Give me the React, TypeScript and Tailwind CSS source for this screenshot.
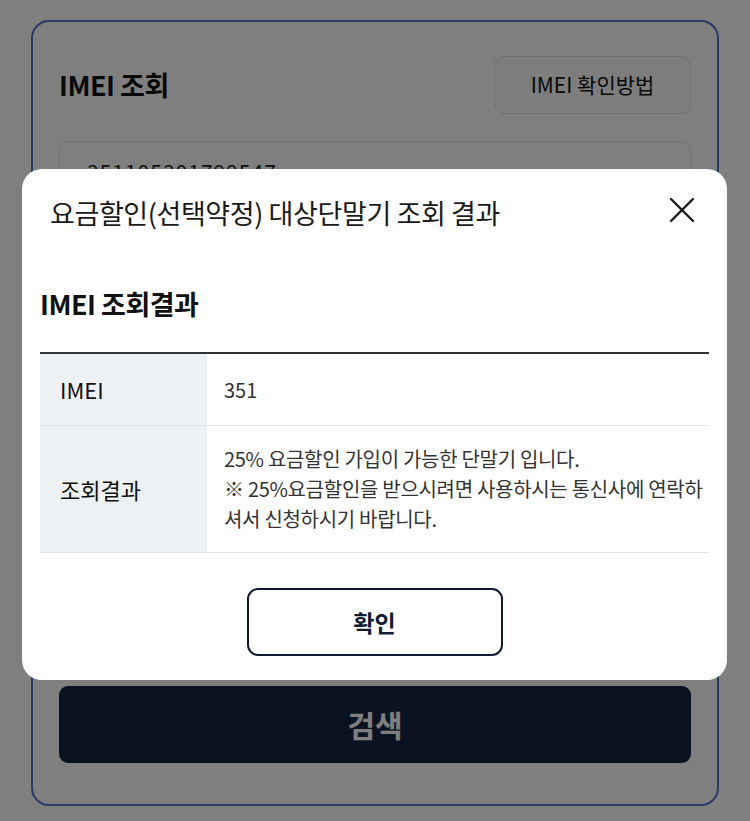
import React from 'react';

const font = { fontFamily: '"Noto Sans CJK KR", "Noto Sans", sans-serif' };

const CloseIcon = () => (
  <svg width="26" height="26" viewBox="0 0 26 26" fill="none" stroke="#1a1a1a" strokeWidth="2.4" strokeLinecap="round">
    <path d="M2 2L24 24M24 2L2 24" />
  </svg>
);

const App: React.FC = () => {
  return (
    <div className="relative w-[750px] h-[821px] bg-white overflow-hidden" style={font}>
      {/* underlying page */}
      <div className="pt-[20px] px-[31px]">
        <div className="h-[786px] rounded-[18px] border-2 border-[#5873d0] px-[26px] pt-[34px]">
          <div className="flex items-center justify-between">
            <h1 className="text-[27px] font-bold text-[#111] tracking-[-0.5px]">IMEI 조회</h1>
            <button className="w-[197px] h-[58px] rounded-[10px] border border-[#e2e4e8] bg-[#fafafa] text-[21px] text-[#111]">
              IMEI 확인방법
            </button>
          </div>
          <div className="mt-[27px] h-[70px] rounded-[10px] border border-[#e2e4e8] px-[27px] pb-[8px] flex items-center text-[21px] text-[#222] tracking-[1px]">
            351105301799547
          </div>
          <div className="mt-[475px] h-[77px] rounded-[9px] bg-[#142445] flex items-center justify-center text-[30px] font-bold text-white">
            검색
          </div>
        </div>
      </div>

      {/* overlay */}
      <div className="absolute inset-0 bg-black/50">
        <div className="absolute left-[22px] top-[169px] w-[705px] h-[511px] rounded-[20px] bg-white px-[18px]">
          <div className="flex items-center justify-between pt-[24px] pl-[10px] pr-[14px]">
            <h2 className="text-[27px] text-[#1a1a1a] tracking-[-0.4px]">요금할인(선택약정) 대상단말기 조회 결과</h2>
            <div className="-mt-[6px]">
              <CloseIcon />
            </div>
          </div>
          <h3 className="mt-[50px] text-[27px] font-bold text-[#111] tracking-[-0.5px]">IMEI 조회결과</h3>
          <div className="mt-[28px] border-t-2 border-[#333]">
            <div className="flex h-[72px] border-b border-[#e2e4e6]">
              <div className="w-[167px] bg-[#eef1f3] flex items-center pl-[20px] text-[22px] text-[#111]">IMEI</div>
              <div className="flex-1 flex items-center pl-[17px] text-[20px] text-[#333]">351</div>
            </div>
            <div className="flex h-[127px] border-b border-[#e2e4e6]">
              <div className="w-[167px] bg-[#eef1f3] flex items-center pl-[20px] text-[22px] text-[#111]">조회결과</div>
              <div className="flex-1 flex flex-col justify-center pl-[17px] pr-[2px] text-[20px] leading-[30px] text-[#333] tracking-[-0.3px]">
                <p>25% 요금할인 가입이 가능한 단말기 입니다.</p>
                <p>※ 25%요금할인을 받으시려면 사용하시는 통신사에 연락하셔서 신청하시기 바랍니다.</p>
              </div>
            </div>
          </div>
          <div className="flex justify-center mt-[35px]">
            <button className="w-[256px] h-[68px] rounded-[11px] border-2 border-[#0f1a33] text-[23px] font-bold text-[#0f1a33]">
              확인
            </button>
          </div>
        </div>
      </div>
    </div>
  );
};

export default App;
